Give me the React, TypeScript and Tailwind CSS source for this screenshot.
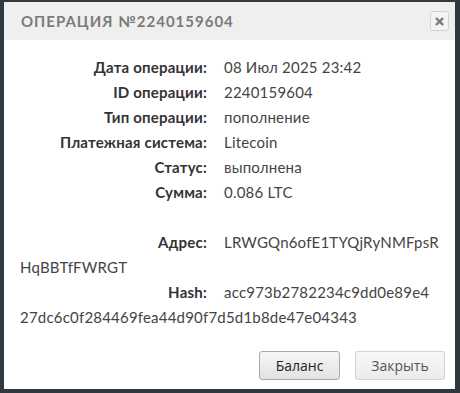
import React from 'react';

const rows: [string, string][] = [
  ['Дата операции:', '08 Июл 2025 23:42'],
  ['ID операции:', '2240159604'],
  ['Тип операции:', 'пополнение'],
  ['Платежная система:', 'Litecoin'],
  ['Статус:', 'выполнена'],
  ['Сумма:', '0.086 LTC'],
];

const Label: React.FC<{ children: React.ReactNode }> = ({ children }) => (
  <span className="inline-block w-[204px] pr-[17px] text-right font-bold text-[#333]">{children}</span>
);

const App: React.FC = () => {
  return (
    <div className="h-[393px] w-[460px] bg-[#2e3a40] pl-[4px] pr-[5px] pt-[2px] pb-[4px]">
      <div className="flex h-full flex-col bg-white">
        {/* Header */}
        <div className="flex h-[38px] items-center justify-between bg-[#efefef] pl-[17px] pr-[6px]">
          <span className="font-['Lato',sans-serif] text-[15px] font-bold tracking-[1px] text-[#7b7b7b]">
            ОПЕРАЦИЯ №2240159604
          </span>
          <button className="flex h-[20px] w-[19px] items-center justify-center rounded-[3px] border border-[#d2d2d2] bg-[#f4f4f4]">
            <svg width="9" height="9" viewBox="0 0 10 10">
              <path d="M2 2 L8 8 M8 2 L2 8" stroke="#7a7a7a" strokeWidth="2.6" strokeLinecap="square" />
            </svg>
          </button>
        </div>

        {/* Body */}
        <div className="pl-[16px] pr-[8px] pt-[15px] font-['Lato',sans-serif] text-[15px] leading-[25px] tracking-[0.2px] text-[#444] [word-break:break-all]">
          {rows.map(([k, v]) => (
            <div key={k}>
              <Label>{k}</Label>
              <span>{v}</span>
            </div>
          ))}
          <div className="h-[25px]" />
          <div>
            <Label>Адрес:</Label>
            <span>LRWGQn6ofE1TYQjRyNMFpsR<br />HqBBTfFWRGT</span>
          </div>
          <div>
            <Label>Hash:</Label>
            <span>acc973b2782234c9dd0e89e4<br />27dc6c0f284469fea44d90f7d5d1b8de47e04343</span>
          </div>
        </div>

        {/* Footer */}
        <div className="mt-auto flex justify-end gap-[15px] pb-[9px] pr-[10px] font-['Open_Sans',sans-serif] text-[14px]">
          <button className="h-[29px] w-[81px] rounded-[3px] border border-[#a9a9a9] bg-gradient-to-b from-[#f6f6f6] to-[#e2e2e2] text-[#222]">
            Баланс
          </button>
          <button className="h-[29px] w-[90px] rounded-[3px] border border-[#d3d3d3] bg-gradient-to-b from-[#f8f8f8] to-[#ebebeb] text-[#555]">
            Закрыть
          </button>
        </div>
      </div>
    </div>
  );
};

export default App;
